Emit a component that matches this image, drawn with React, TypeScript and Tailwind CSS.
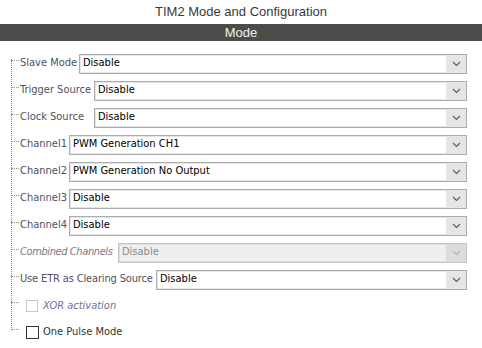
import React from 'react';

type Row = {
  label: string;
  labelW: number;
  value?: string;
  disabled?: boolean;
  italic?: boolean;
  tight?: boolean;
};

const rows: Row[] = [
  { label: 'Slave Mode', labelW: 59, value: 'Disable' },
  { label: 'Trigger Source', labelW: 74, value: 'Disable' },
  { label: 'Clock Source', labelW: 74, value: 'Disable' },
  { label: 'Channel1', labelW: 49, value: 'PWM Generation CH1' },
  { label: 'Channel2', labelW: 49, value: 'PWM Generation No Output' },
  { label: 'Channel3', labelW: 49, value: 'Disable' },
  { label: 'Channel4', labelW: 49, value: 'Disable' },
  { label: 'Combined Channels', labelW: 98, value: 'Disable', disabled: true, italic: true, tight: true },
  { label: 'Use ETR as Clearing Source', labelW: 136, value: 'Disable', tight: true }
];

const Chevron = ({ color }: { color: string }) => <svg width="9" height="6" viewBox="0 0 9 6">
    <path d="M1 1 L4.5 4.5 L8 1" fill="none" stroke={color} strokeWidth="1.1" />
  </svg>;

const Select = ({ value, disabled }: { value: string; disabled?: boolean }) => <div className={`flex-1 h-[20px] flex border ${disabled ? 'border-[#c4c4c4] bg-[#dcdcdc]' : 'border-[#acacac] bg-[#e5e5e5]'}`}>
    <div className={`flex-1 flex items-center pl-[2px] my-[1px] ml-[1px] ${disabled ? 'bg-[#efefef] text-[#8a8a8a]' : 'bg-white text-black'}`}>
      {value}
    </div>
    <div className="w-[20px] flex items-center justify-center">
      <Chevron color={disabled ? '#b4b4b4' : '#5a5a5a'} />
    </div>
  </div>;

const Tick = () => <div className="w-[20px] h-full relative shrink-0">
    <div className="absolute left-[11px] top-[calc(50%-4px)] w-[8px] border-t border-dotted border-[#8c8c8c]" />
  </div>;

export default function App() {
  return <div className="w-[482px] h-[348px] bg-white overflow-hidden" style={{ fontFamily: '"DejaVu Sans Condensed", "DejaVu Sans", sans-serif' }}>
      <div className="h-[24px] flex items-center justify-center text-[13px] text-[#3a3a3a]" style={{ fontFamily: '"Liberation Sans", Arial, sans-serif' }}>
        TIM2 Mode and Configuration
      </div>
      <div className="h-[17px] bg-[#4b4d4b] flex items-center justify-center text-[13px] text-[#f2f2f2]" style={{ fontFamily: '"Liberation Sans", Arial, sans-serif' }}>
        Mode
      </div>
      <div className="relative pt-[9px] pr-[15px] text-[11px] whitespace-nowrap">
        {/* tree trunk */}
        <div className="absolute left-[11px] top-[18px] h-[269px] border-l border-dotted border-[#8c8c8c]" />
        {rows.map(r => <div key={r.label} className="h-[27px] flex items-center">
            <Tick />
            <div className={`shrink-0 ${r.italic ? 'italic text-[#7a7a7a] tracking-[-0.4px]' : 'text-[#505060]'} ${r.tight && !r.italic ? 'tracking-[-0.15px]' : ''}`} style={{ width: r.labelW }}>
              {r.label}
            </div>
            <Select value={r.value!} disabled={r.disabled} />
          </div>)}
        <div className="h-[26px] flex items-center">
          <Tick />
          <div className="w-[12px] h-[12px] border border-[#c8c8c8] ml-[6px] mr-[5px]" />
          <span className="italic text-[#7070a0]">XOR activation</span>
        </div>
        <div className="h-[27px] flex items-center">
          <Tick />
          <div className="w-[13px] h-[13px] border border-[#333] ml-[6px] mr-[4px]" />
          <span className="text-[#333]">One Pulse Mode</span>
        </div>
      </div>
    </div>;
}
